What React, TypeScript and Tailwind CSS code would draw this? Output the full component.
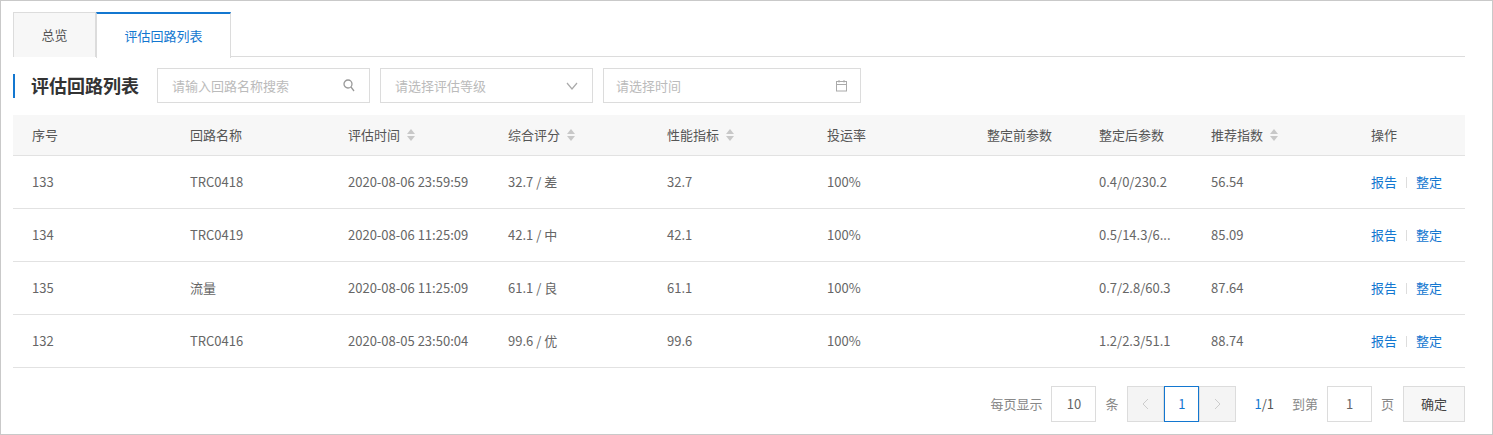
import React from "react";

const cols = [
  { t: "序号", w: 158 }, { t: "回路名称", w: 158 }, { t: "评估时间", w: 160, s: true },
  { t: "综合评分", w: 159, s: true }, { t: "性能指标", w: 160, s: true }, { t: "投运率", w: 160 },
  { t: "整定前参数", w: 112 }, { t: "整定后参数", w: 112 }, { t: "推荐指数", w: 160, s: true }, { t: "操作", w: 113 },
];
const rows = [
  ["133", "TRC0418", "2020-08-06 23:59:59", "32.7 / 差", "32.7", "100%", "", "0.4/0/230.2", "56.54"],
  ["134", "TRC0419", "2020-08-06 11:25:09", "42.1 / 中", "42.1", "100%", "", "0.5/14.3/6...", "85.09"],
  ["135", "流量", "2020-08-06 11:25:09", "61.1 / 良", "61.1", "100%", "", "0.7/2.8/60.3", "87.64"],
  ["132", "TRC0416", "2020-08-05 23:50:04", "99.6 / 优", "99.6", "100%", "", "1.2/2.3/51.1", "88.74"],
];

const Sort = () => (
  <svg width="8" height="14" viewBox="0 0 8 14" className="ml-[7px]">
    <path d="M4 1 L8 6 H0 Z" fill="#c8c8c8" />
    <path d="M4 13 L8 8 H0 Z" fill="#c8c8c8" />
  </svg>
);

export default function App() {
  return (
    <div className="w-[1493px] h-[435px] border border-[#c9c9c9] bg-white text-[13px] text-[#666]" style={{ fontFamily: '"Noto Sans CJK SC", "Noto Sans", sans-serif' }}>
      <div className="px-3 pt-[11px]">
        <div className="flex border-b border-[#dcdcdc] w-[1452px] h-[45px]">
          <div className="w-[83px] h-[45px] border border-[#dcdcdc] border-b-0 bg-[#f7f7f7] flex items-center justify-center text-[#555]">总览</div>
          <div className="w-[135px] h-[46px] border-x border-[#dcdcdc] border-t-2 border-t-[#1377d0] bg-white flex items-center justify-center text-[#1377d0] -mb-px">评估回路列表</div>
        </div>
        <div className="flex items-center mt-[11px] h-[35px]">
          <div className="w-[2px] h-[24px] bg-[#1377d0]" />
          <div className="ml-[16px] text-[18px] font-bold text-[#333] w-[126px]">评估回路列表</div>
          <div className="w-[213px] h-[35px] border border-[#dcdcdc] flex items-center justify-between px-[14px] text-[#bbb]">
            <span>请输入回路名称搜索</span>
            <svg width="12" height="13" viewBox="0 0 12 13" fill="none" stroke="#999" strokeWidth="1.3"><circle cx="5" cy="5" r="4" /><path d="M8 8 L11 12" /></svg>
          </div>
          <div className="ml-[10px] w-[213px] h-[35px] border border-[#dcdcdc] flex items-center justify-between px-[14px] text-[#bbb]">
            <span>请选择评估等级</span>
            <svg width="12" height="8" viewBox="0 0 12 8" fill="none" stroke="#aaa" strokeWidth="1.2"><path d="M1 1 L6 7 L11 1" /></svg>
          </div>
          <div className="ml-[10px] w-[258px] h-[35px] border border-[#dcdcdc] flex items-center justify-between px-[12px] text-[#bbb]">
            <span>请选择时间</span>
            <svg width="13" height="13" viewBox="0 0 13 13" fill="none" stroke="#aaa" strokeWidth="1"><rect x="1.5" y="2.5" width="10" height="9.5" /><path d="M1.5 5.5 H11.5 M4 1 V3.5 M9 1 V3.5" /></svg>
          </div>
        </div>
        <div className="mt-[12px] w-[1452px]">
          <div className="flex h-[41px] bg-[#f7f7f7] border-b border-[#e2e2e2] items-center">
            {cols.map((c, i) => (
              <div key={i} style={{ width: c.w }} className="pl-[19px] flex items-center text-[#555]">{c.t}{c.s && <Sort />}</div>
            ))}
          </div>
          {rows.map((r, ri) => (
            <div key={ri} className="flex h-[53px] border-b border-[#e2e2e2] items-center">
              {r.map((v, i) => (
                <div key={i} style={{ width: cols[i].w }} className="pl-[19px] whitespace-nowrap">{v}</div>
              ))}
              <div style={{ width: 113 }} className="pl-[19px] flex items-center text-[#1377d0]">
                报告<span className="mx-[9px] w-px h-[11px] bg-[#ddd]" />整定
              </div>
            </div>
          ))}
        </div>
        <div className="flex items-center justify-end mt-[18px] w-[1452px] text-[#888]">
          <span className="mr-[9px]">每页显示</span>
          <div className="w-[45px] h-[36px] border border-[#dcdcdc] flex items-center justify-center text-[#666]">10</div>
          <span className="mx-[9px]">条</span>
          <div className="w-[37px] h-[36px] border border-[#dcdcdc] bg-[#f4f4f4] flex items-center justify-center">
            <svg width="7" height="12" viewBox="0 0 7 12" fill="none" stroke="#ccc"><path d="M6 1 L1 6 L6 11" /></svg>
          </div>
          <div className="w-[35px] h-[36px] border border-[#1377d0] flex items-center justify-center text-[#1377d0]">1</div>
          <div className="w-[37px] h-[36px] border border-[#dcdcdc] bg-[#f4f4f4] flex items-center justify-center">
            <svg width="7" height="12" viewBox="0 0 7 12" fill="none" stroke="#ccc"><path d="M1 1 L6 6 L1 11" /></svg>
          </div>
          <span className="ml-[18px] text-[#555]"><span className="text-[#1377d0]">1</span>/1</span>
          <span className="ml-[18px] mr-[9px]">到第</span>
          <div className="w-[45px] h-[36px] border border-[#dcdcdc] flex items-center justify-center text-[#666]">1</div>
          <span className="mx-[9px]">页</span>
          <div className="w-[62px] h-[36px] border border-[#dcdcdc] bg-[#f7f7f7] flex items-center justify-center text-[#444]">确定</div>
        </div>
      </div>
    </div>
  );
}
